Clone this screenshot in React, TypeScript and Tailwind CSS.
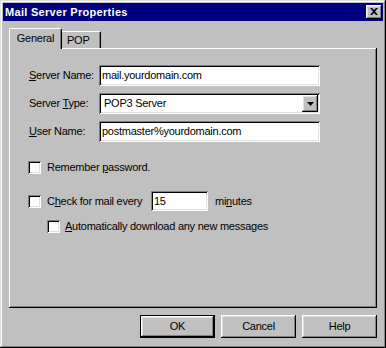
import React from "react";

const raised =
  "shadow-[inset_-1px_-1px_#000,inset_1px_1px_#fff,inset_-2px_-2px_#808080,inset_2px_2px_#dfdfdf]";
const sunken =
  "shadow-[inset_1px_1px_#808080,inset_-1px_-1px_#fff,inset_2px_2px_#000,inset_-2px_-2px_#dfdfdf]";

function Checkbox() {
  return <div className={`w-[13px] h-[13px] bg-white shrink-0 ${sunken}`} />;
}

function Field({ value, width }: { value: string; width: string }) {
  return (
    <div
      className={`${width} h-[21px] bg-white flex items-center pl-[3px] text-black ${sunken}`}
    >
      {value}
    </div>
  );
}

function Button({ label, primary }: { label: string; primary?: boolean }) {
  return (
    <div
      className={`w-[75px] h-[23px] flex items-center justify-center text-black ${
        primary
          ? "shadow-[inset_0_0_0_1px_#000,inset_-2px_-2px_#000,inset_2px_2px_#fff,inset_-3px_-3px_#808080,inset_3px_3px_#dfdfdf]"
          : raised
      }`}
    >
      {label}
    </div>
  );
}

export default function App() {
  return (
    <div
      className="w-[386px] h-[348px] bg-[#c0c0c0] p-[3px] flex flex-col text-[11px] leading-none tracking-[-0.25px] text-black shadow-[inset_-1px_-1px_#000,inset_1px_1px_#dfdfdf,inset_-2px_-2px_#808080,inset_2px_2px_#fff]"
      style={{ fontFamily: '"Liberation Sans", Arial, sans-serif' }}
    >
      {/* title bar */}
      <div className="h-[18px] bg-[#000080] flex items-center justify-between pl-[2px] pr-[1px]">
        <span className="text-white font-bold text-[11px] tracking-[0.3px]">Mail Server Properties</span>
        <div className={`w-[16px] h-[14px] bg-[#c0c0c0] flex items-center justify-center ${raised}`}>
          <svg width="8" height="7" viewBox="0 0 8 7" className="mb-[1px]">
            <path d="M0 0h2l2 2 2-2h2L5 3.5 8 7H6L4 5 2 7H0l3-3.5z" fill="#000" />
          </svg>
        </div>
      </div>

      <div className="px-[6px] pt-[7px] flex flex-col">
        {/* tabs */}
        <div className="relative z-10 h-[21px] -mb-px flex items-end">
          <div className="h-[21px] w-[53px] bg-[#c0c0c0] border-l border-t border-white border-r border-r-black rounded-t-[2px] shadow-[inset_-1px_0_#808080] flex items-center justify-center pb-[2px]">
            General
          </div>
          <div className="h-[17px] w-[39px] mb-px bg-[#c0c0c0] border-t border-white border-r border-r-black rounded-tr-[2px] shadow-[inset_-1px_0_#808080] flex items-center pl-[5px]">
            POP
          </div>
        </div>

        {/* panel */}
        <div className="h-[260px] bg-[#c0c0c0] pl-[19px] pt-[17px] flex flex-col shadow-[inset_-1px_-1px_#000,inset_1px_1px_#fff,inset_-2px_-2px_#808080]">
          <div className="flex items-center h-[21px]">
            <span className="w-[71px] pl-px">
              <u>S</u>erver Name:
            </span>
            <Field value="mail.yourdomain.com" width="w-[221px]" />
          </div>
          <div className="flex items-center h-[21px] mt-[7px]">
            <span className="w-[71px] pl-px">
              Server <u>T</u>ype:
            </span>
            <div className={`w-[221px] h-[21px] bg-white flex items-center justify-between pl-[5px] pr-[2px] ${sunken}`}>
              <span>POP3 Server</span>
              <div className={`w-[16px] h-[17px] bg-[#c0c0c0] flex items-center justify-center ${raised}`}>
                <svg width="7" height="4" viewBox="0 0 7 4">
                  <path d="M0 0h7L3.5 4z" fill="#000" />
                </svg>
              </div>
            </div>
          </div>
          <div className="flex items-center h-[21px] mt-[7px]">
            <span className="w-[71px] pl-px">
              <u>U</u>ser Name:
            </span>
            <Field value="postmaster%yourdomain.com" width="w-[221px]" />
          </div>

          <div className="flex items-center h-[13px] mt-[19px]">
            <Checkbox />
            <span className="ml-[6px]">
              Remember <u>p</u>assword.
            </span>
          </div>

          <div className="flex items-center h-[20px] mt-[17px]">
            <Checkbox />
            <span className="ml-[6px] w-[104px]">
              C<u>h</u>eck for mail every
            </span>
            <div className={`w-[57px] h-[20px] bg-white flex items-center pl-[3px] ${sunken}`}>15</div>
            <span className="ml-[7px]">
              mi<u>n</u>utes
            </span>
          </div>

          <div className="flex items-center h-[13px] mt-[9px] ml-[19px]">
            <Checkbox />
            <span className="ml-[5px]">
              <u>A</u>utomatically download any new messages
            </span>
          </div>
        </div>

        {/* buttons */}
        <div className="flex justify-end gap-[6px] mt-[7px]">
          <Button label="OK" primary />
          <Button label="Cancel" />
          <Button label="Help" />
        </div>
      </div>
    </div>
  );
}
